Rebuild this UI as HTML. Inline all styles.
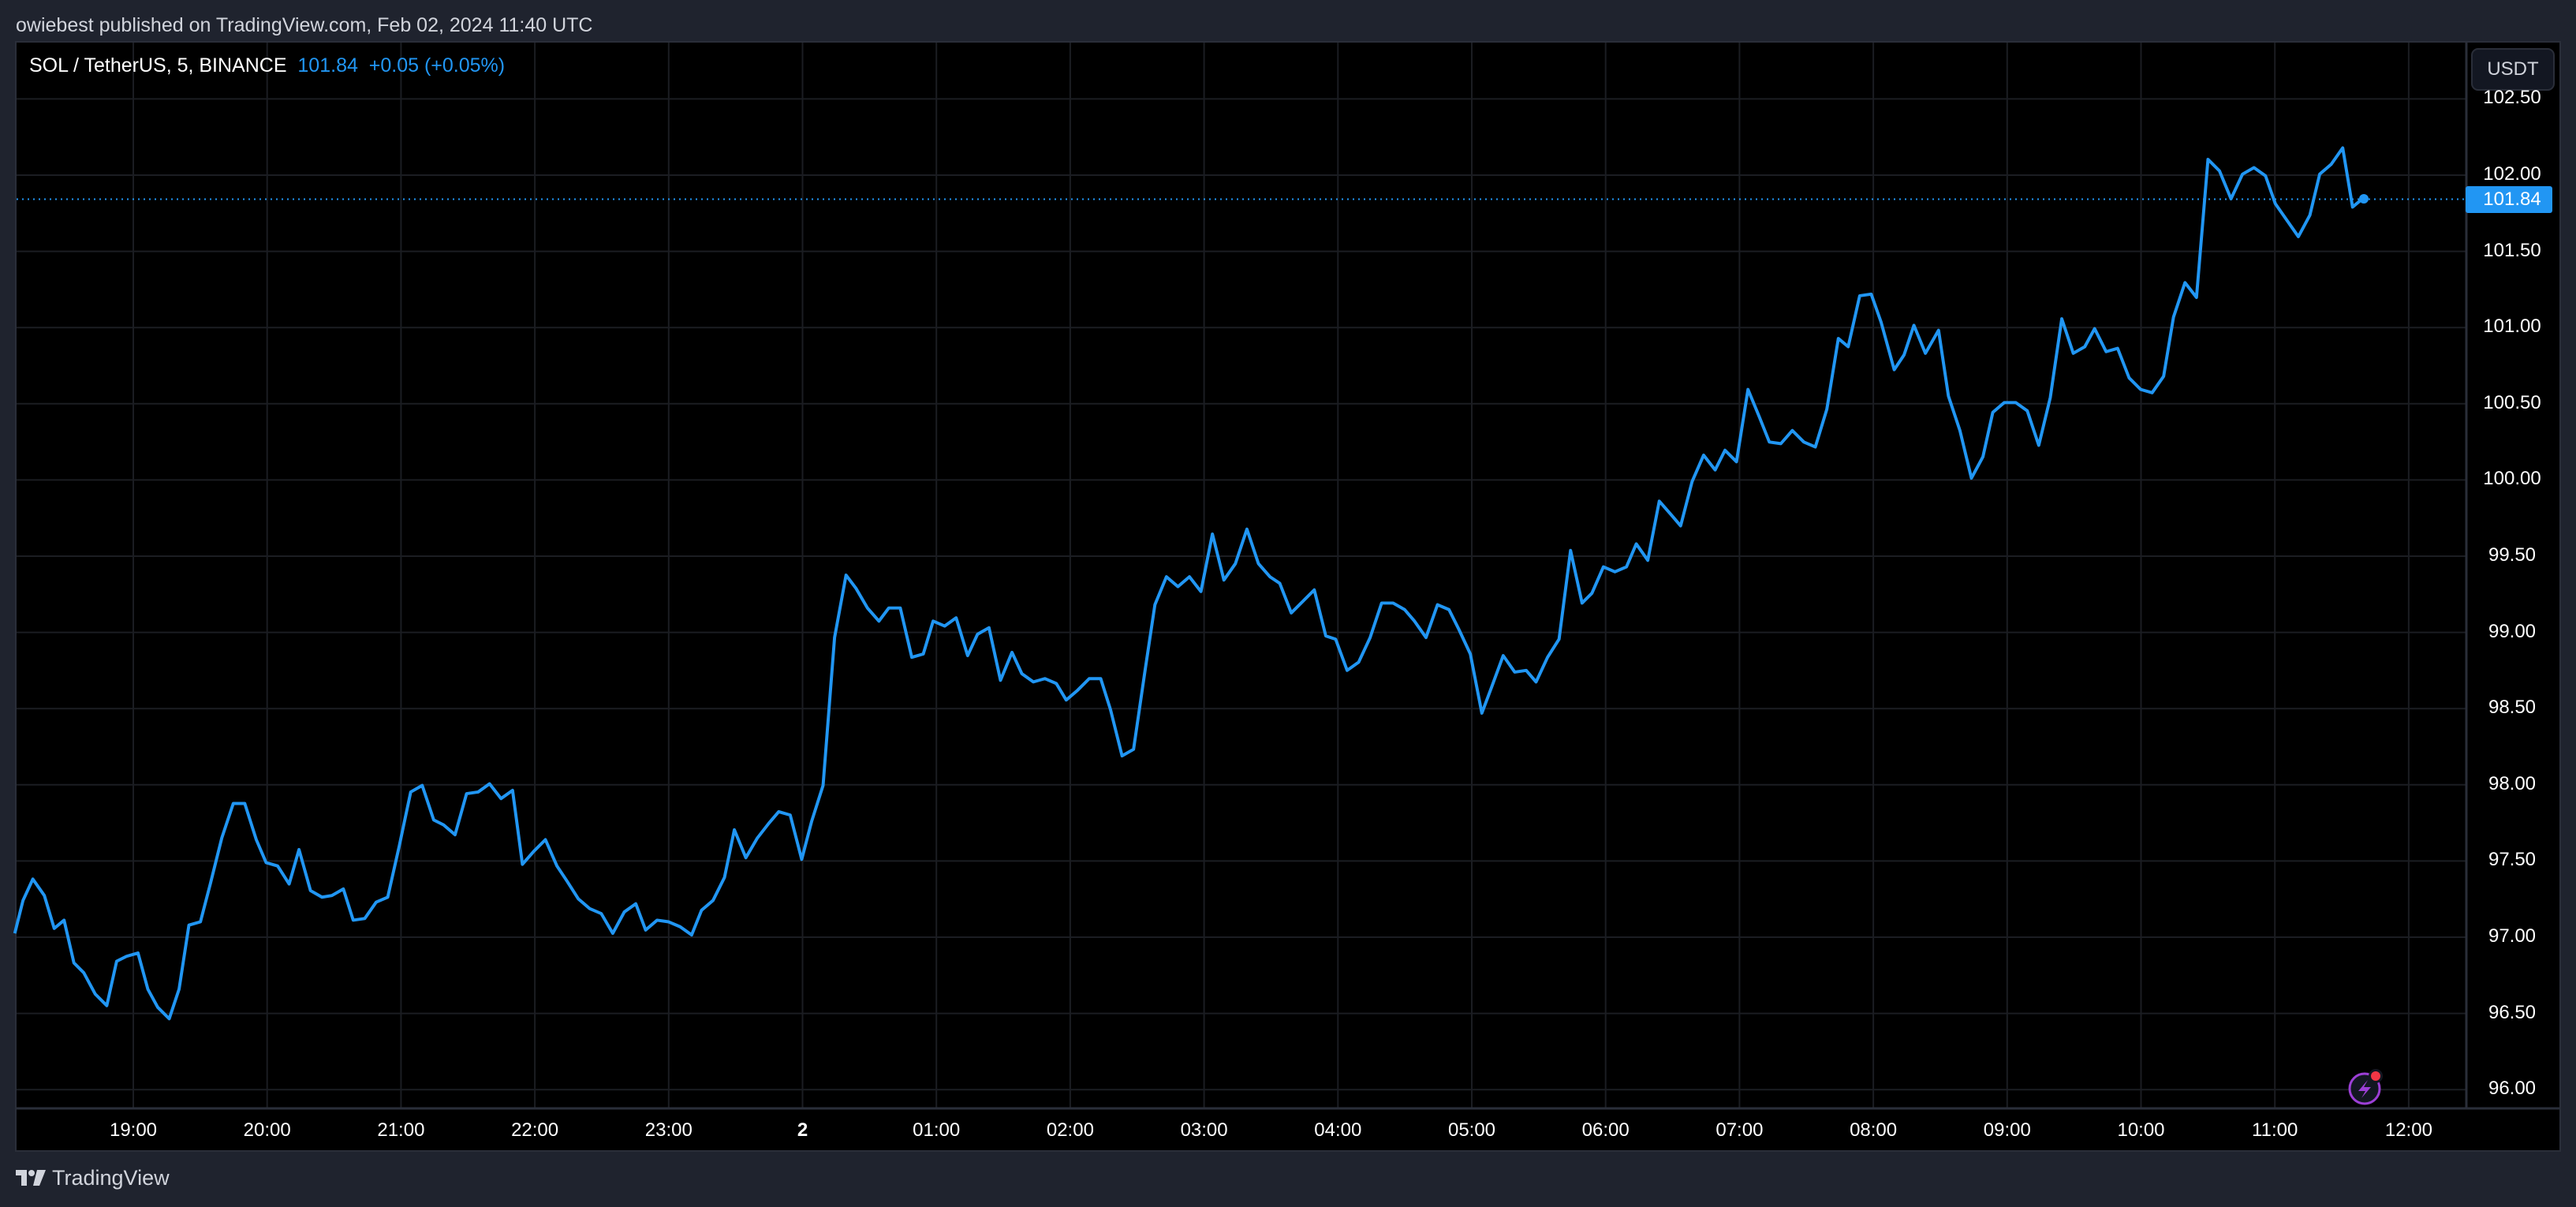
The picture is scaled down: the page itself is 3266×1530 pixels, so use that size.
<!DOCTYPE html>
<html><head><meta charset="utf-8"><style>
html,body{margin:0;padding:0;background:#1f232e;width:3266px;height:1530px;overflow:hidden;font-family:"Liberation Sans",sans-serif}
.t{position:absolute;white-space:nowrap}
</style></head><body>
<svg width="3266" height="1530" style="position:absolute;left:0;top:0">
<rect x="0" y="0" width="3266" height="1530" fill="#1f232e"/>
<rect x="20" y="53" width="3226" height="1406" fill="#000" stroke="#2a2e39" stroke-width="2"/>
<g stroke="#1b1d22" stroke-width="2">
<line x1="21" x2="3127" y1="125.4" y2="125.4"/><line x1="21" x2="3127" y1="222" y2="222"/><line x1="21" x2="3127" y1="318.6" y2="318.6"/><line x1="21" x2="3127" y1="415.2" y2="415.2"/><line x1="21" x2="3127" y1="511.8" y2="511.8"/><line x1="21" x2="3127" y1="608.4" y2="608.4"/><line x1="21" x2="3127" y1="705" y2="705"/><line x1="21" x2="3127" y1="801.6" y2="801.6"/><line x1="21" x2="3127" y1="898.2" y2="898.2"/><line x1="21" x2="3127" y1="994.8" y2="994.8"/><line x1="21" x2="3127" y1="1091.4" y2="1091.4"/><line x1="21" x2="3127" y1="1188" y2="1188"/><line x1="21" x2="3127" y1="1284.6" y2="1284.6"/><line x1="21" x2="3127" y1="1381.2" y2="1381.2"/>
<line y1="54" y2="1405" x1="169" x2="169"/><line y1="54" y2="1405" x1="338.7" x2="338.7"/><line y1="54" y2="1405" x1="508.4" x2="508.4"/><line y1="54" y2="1405" x1="678.1" x2="678.1"/><line y1="54" y2="1405" x1="847.8" x2="847.8"/><line y1="54" y2="1405" x1="1017.5" x2="1017.5"/><line y1="54" y2="1405" x1="1187.2" x2="1187.2"/><line y1="54" y2="1405" x1="1356.9" x2="1356.9"/><line y1="54" y2="1405" x1="1526.6" x2="1526.6"/><line y1="54" y2="1405" x1="1696.3" x2="1696.3"/><line y1="54" y2="1405" x1="1866" x2="1866"/><line y1="54" y2="1405" x1="2035.7" x2="2035.7"/><line y1="54" y2="1405" x1="2205.4" x2="2205.4"/><line y1="54" y2="1405" x1="2375.1" x2="2375.1"/><line y1="54" y2="1405" x1="2544.8" x2="2544.8"/><line y1="54" y2="1405" x1="2714.5" x2="2714.5"/><line y1="54" y2="1405" x1="2884.2" x2="2884.2"/><line y1="54" y2="1405" x1="3053.9" x2="3053.9"/>
</g>
<line x1="21" x2="3245" y1="1405" y2="1405" stroke="#2a2e39" stroke-width="3"/>
<line x1="3127" x2="3127" y1="54" y2="1405" stroke="#2a2e39" stroke-width="3"/>
<line x1="21" x2="3127" y1="252.5" y2="252.5" stroke="#2196f3" stroke-width="2" stroke-dasharray="2,5"/>
<g transform="scale(2.0829)">
<polyline fill="none" stroke="#2196f3" stroke-width="1.9" stroke-linejoin="round" points="9,568 14,548 20,535 27,545 33,565 39,560 45,586 51,592 58,605 65,612 71,585 77,582 84,580 90,602 96,613 103,620 109,602 115,563 122,561 128,538 135,510 142,489 149,489 156,511 162,525 169,527 176,538 182,517 189,542 196,546 202,545 209,541 215,560 222,559 229,549 236,546 243,515 250,482 257,478 264,499 270,502 277,508 284,483 291,482 298,477 305,486 312,481 318,526 325,518 332,511 339,527 345,536 352,547 359,553 366,556 373,568 380,555 387,550 393,566 400,560 407,561 414,564 421,569 427,554 434,548 441,534 447,505 454,522 461,510 468,501 474,494 481,496 488,523 494,500 501,478 508,388 515,350 521,358 528,370 535,378 541,370 548,370 555,400 562,398 568,378 575,381 582,376 589,399 595,386 602,382 609,414 616,397 622,410 629,415 636,413 643,416 649,426 656,420 663,413 670,413 676,432 683,460 690,456 697,408 703,368 710,351 717,357 724,351 731,360 738,325 745,353 752,343 759,322 766,343 773,351 779,355 786,373 793,366 800,359 807,387 813,389 820,408 827,403 834,388 841,367 848,367 855,371 861,378 868,388 875,368 882,371 888,383 895,398 902,434 908,418 915,399 922,409 929,408 935,415 942,400 949,389 956,335 963,367 969,361 976,345 983,348 990,345 996,331 1003,341 1010,305 1017,313 1023,320 1030,293 1037,277 1044,286 1050,274 1057,281 1064,237 1071,254 1077,269 1084,270 1091,262 1098,269 1105,272 1112,249 1119,206 1125,211 1132,180 1139,179 1145,196 1153,225 1159,216 1165,198 1172,215 1180,201 1186,241 1193,262 1200,291 1207,278 1213,251 1220,245 1227,245 1234,250 1241,271 1248,242 1255,194 1262,215 1269,211 1275,200 1282,214 1289,212 1296,230 1303,237 1310,239 1317,229 1323,193 1330,172 1337,181 1344,97 1351,104 1358,121 1365,106 1372,102 1379,107 1385,124 1392,134 1399,144 1406,131 1412,106 1419,100 1426,90 1432,126 1438,121"/>
</g>
<circle cx="2997" cy="252" r="6" fill="#2196f3"/>
<rect x="3126" y="236" width="110" height="34" rx="3" fill="#2196f3"/>
<rect x="3134" y="62" width="104" height="52" rx="8" fill="#131722" stroke="#2a2e39" stroke-width="2"/>
<circle cx="2998" cy="1380" r="19" fill="#131722" stroke="#9c3fd6" stroke-width="3"/>
<path d="M3002 1369 L2990 1383 L2999 1383 L2994 1392 L3006 1378 L2997 1378 Z" fill="#9c3fd6"/>
<circle cx="3012" cy="1364" r="9" fill="#131722"/><circle cx="3012" cy="1364" r="6" fill="#f23645"/>
<g fill="#d1d4dc"><rect x="20" y="1483" width="14" height="7"/><rect x="27" y="1483" width="7" height="20"/><circle cx="40" cy="1487" r="4"/><path d="M47 1483 L58 1483 L50 1503 L42 1503 Z"/></g>
</svg>
<div class="t" style="left:20px;top:18px;font-size:25px;color:#d1d4dc">owiebest published on TradingView.com, Feb 02, 2024 11:40 UTC</div>
<div class="t" style="left:37px;top:69px;font-size:25px;color:#fff">SOL / TetherUS, 5, BINANCE&nbsp; <span style="color:#2196f3">101.84&nbsp; +0.05 (+0.05%)</span></div>
<div class="t" style="left:3134px;top:74px;width:104px;text-align:center;font-size:24px;color:#d1d4dc">USDT</div>
<div style="position:absolute;left:3130px;top:0;width:110px;font-size:24px;color:#fff;text-align:center">
<div class="t" style="left:0;width:110px;top:110px;text-align:center">102.50</div>
<div class="t" style="left:0;width:110px;top:207px;text-align:center">102.00</div>
<div class="t" style="left:0;width:110px;top:239px;text-align:center">101.84</div>
<div class="t" style="left:0;width:110px;top:304px;text-align:center">101.50</div>
<div class="t" style="left:0;width:110px;top:400px;text-align:center">101.00</div>
<div class="t" style="left:0;width:110px;top:497px;text-align:center">100.50</div>
<div class="t" style="left:0;width:110px;top:593px;text-align:center">100.00</div>
<div class="t" style="left:0;width:110px;top:690px;text-align:center">99.50</div>
<div class="t" style="left:0;width:110px;top:787px;text-align:center">99.00</div>
<div class="t" style="left:0;width:110px;top:883px;text-align:center">98.50</div>
<div class="t" style="left:0;width:110px;top:980px;text-align:center">98.00</div>
<div class="t" style="left:0;width:110px;top:1076px;text-align:center">97.50</div>
<div class="t" style="left:0;width:110px;top:1173px;text-align:center">97.00</div>
<div class="t" style="left:0;width:110px;top:1270px;text-align:center">96.50</div>
<div class="t" style="left:0;width:110px;top:1366px;text-align:center">96.00</div>
</div>
<div style="position:absolute;left:0;top:1419px;font-size:24px;color:#fff">
<div class="t" style="left:119px;width:100px;text-align:center">19:00</div>
<div class="t" style="left:288.7px;width:100px;text-align:center">20:00</div>
<div class="t" style="left:458.4px;width:100px;text-align:center">21:00</div>
<div class="t" style="left:628.1px;width:100px;text-align:center">22:00</div>
<div class="t" style="left:797.8px;width:100px;text-align:center">23:00</div>
<div class="t" style="left:967.5px;width:100px;text-align:center;font-weight:bold">2</div>
<div class="t" style="left:1137.2px;width:100px;text-align:center">01:00</div>
<div class="t" style="left:1306.9px;width:100px;text-align:center">02:00</div>
<div class="t" style="left:1476.6px;width:100px;text-align:center">03:00</div>
<div class="t" style="left:1646.3px;width:100px;text-align:center">04:00</div>
<div class="t" style="left:1816px;width:100px;text-align:center">05:00</div>
<div class="t" style="left:1985.7px;width:100px;text-align:center">06:00</div>
<div class="t" style="left:2155.4px;width:100px;text-align:center">07:00</div>
<div class="t" style="left:2325.1px;width:100px;text-align:center">08:00</div>
<div class="t" style="left:2494.8px;width:100px;text-align:center">09:00</div>
<div class="t" style="left:2664.5px;width:100px;text-align:center">10:00</div>
<div class="t" style="left:2834.2px;width:100px;text-align:center">11:00</div>
<div class="t" style="left:3003.9px;width:100px;text-align:center">12:00</div>
</div>
<div class="t" style="left:66px;top:1478px;font-size:27px;color:#d1d4dc">TradingView</div>
</body></html>
